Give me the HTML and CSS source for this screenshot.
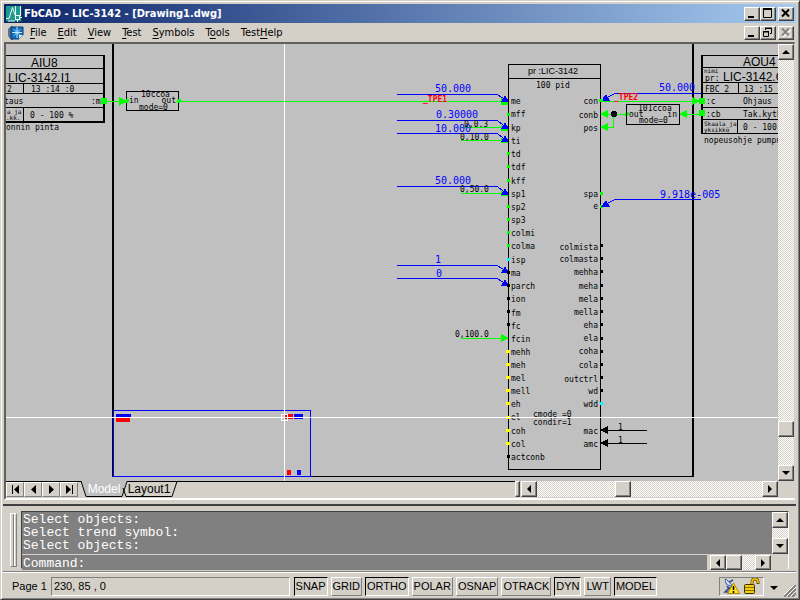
FILE: index.html
```html
<!DOCTYPE html>
<html lang="en">
<head>
<meta charset="utf-8">
<title>FbCAD - LIC-3142 - [Drawing1.dwg]</title>
<link rel="stylesheet" href="styles.css">
</head>
<body>
<div class="window">
  <header class="titlebar">
    <svg class="app-icon" width="16" height="16" viewBox="0 0 16 16" aria-hidden="true">
      <rect width="16" height="16" fill="#1f9a92"/>
      <path d="M0 15.5H15.5V0" fill="none" stroke="#0b4a50"/>
      <path d="M0 12.5H3L6.500 1.500L9 9M9.500 0V9M14.500 0V10M2 15H9" fill="none" stroke="#e8f8f4"/>
      <rect x="9.500" y="9.500" width="4" height="4" fill="#1f9a92" stroke="#fff"/>
      <path d="M11.500 13.500V16M13.500 11.500H16" stroke="#fff"/>
    </svg>
    <h1 class="title">FbCAD - LIC-3142 - [Drawing1.dwg]</h1>
    <div class="caption-buttons">
      <button class="btn" aria-label="Minimize"><svg width="12" height="11"><path d="M2 9H8" stroke="#000" stroke-width="2"/></svg></button>
      <button class="btn" aria-label="Maximize"><svg width="12" height="11"><path d="M1.500 1V9.500H9.500V1M1 1.500H10M1 .5H10" fill="none" stroke="#000"/></svg></button>
      <button class="btn close" aria-label="Close"><svg width="12" height="11"><path d="M2 1.500L9 8.500M9 1.500L2 8.500" stroke="#000" stroke-width="2"/></svg></button>
    </div>
  </header>

  <nav class="menubar">
    <svg class="doc-icon" width="16" height="14" viewBox="0 0 16 14" aria-hidden="true">
      <path d="M0 3L3 0H5V14H3L0 10Z" fill="#5d7389"/>
      <path d="M3 1H15V9L11 13H3Z" fill="#0c6fc0" stroke="#123c66"/>
      <path d="M4 6.500H14M9 1V12M6 3.500L12 9.500M12 3.500L6 9.500" stroke="#bfe9ff"/>
      <path d="M11 13V9H15Z" fill="#dff0ff"/>
    </svg>
    <button class="menu"><u>F</u>ile</button>
    <button class="menu"><u>E</u>dit</button>
    <button class="menu"><u>V</u>iew</button>
    <button class="menu"><u>T</u>est</button>
    <button class="menu"><u>S</u>ymbols</button>
    <button class="menu">T<u>o</u>ols</button>
    <button class="menu">Test<u>H</u>elp</button>
    <div class="caption-buttons">
      <button class="btn" aria-label="Minimize drawing"><svg width="12" height="11"><path d="M2 9H8" stroke="#000" stroke-width="2"/></svg></button>
      <button class="btn" aria-label="Restore drawing"><svg width="12" height="11"><path d="M3.500 3V1.500H9.500V6.500H8M3 1H10M1.500 4V9.500H6.500V4M1 4.500H7M1 5H7" fill="none" stroke="#000"/></svg></button>
      <button class="btn close" aria-label="Close drawing" disabled><svg width="12" height="11"><path d="M3 2.500L10 9.500M10 2.500L3 9.500" stroke="#fff" stroke-width="2"/><path d="M2 1.500L9 8.500M9 1.500L2 8.500" stroke="#808080" stroke-width="2"/></svg></button>
    </div>
  </nav>

  <main class="document">
    <div class="canvas">
      <svg class="drawing" width="100%" height="100%" role="img" aria-label="LIC-3142 function block diagram">
        <g transform="translate(-6 -44)">
          <!-- sheet frame -->
          <path class="k2" d="M113 40V477M693 40V477"/>
          <path class="k" d="M113 476.500H694"/>

          <!-- AIU8 input block -->
          <path class="k" d="M0 55.500H104M0 68.500H104M0 83.500H104M0 93.500H104M0 107.500H104M23.500 83V93M23.500 107V122"/>
          <path class="k2" d="M0 122H105M104 55V123"/>
          <text class="t12" x="31" y="67">AIU8</text>
          <text class="t12" x="8" y="82">LIC-3142.I1</text>
          <text class="t8" x="7" y="92">2</text>
          <text class="t8" x="31" y="92" xml:space="preserve">13 :14 :0</text>
          <text class="t8" x="4" y="104">taus</text>
          <text class="t8" x="91" y="104">:m</text>
          <text class="t6" x="7" y="114">a ja</text>
          <text class="t6" x="6" y="120">.kk.</text>
          <text class="t8" x="30" y="118">0 - 100 %</text>
          <text class="t8" x="6" y="130">onnin pinta</text>

          <!-- 10ccoa block -->
          <rect class="k" x="126.500" y="91.500" width="52" height="19"/>
          <text class="t8" x="141" y="97">10ccoa</text>
          <text class="t8" x="129" y="103">in</text>
          <text class="t8 end" x="176" y="103">out</text>
          <text class="t8" x="139" y="110">mode=0</text>

          <!-- signal wires -->
          <path class="g" d="M104 101.500H126M179 101.500H506M461 127.500H506M461 140.500H506M461 193.500H506M461 338.500H506"/>
          <path class="g" d="M601 101.500H695M601 114.500H627M680 114.500H703M613.500 114V127.500H601"/>
          <g class="gf">
            <path d="M101 98h6v6h-6zM119 97l8 4l-8 5zM501 97l8 4v4h-8zM501 125l8 3v3h-8zM501 138l8 2v3h-8zM501 191l8 2v3h-8zM501 334l8 4l-8 4z"/>
            <circle cx="179" cy="101" r="2"/><circle cx="127" cy="101" r="2"/>
          </g>

          <!-- live values on the left side -->
          <path class="b" d="M397 94.500H497L506 100M397 120.500H497L506 127M397 133.500H497L506 140M397 186.500H497L506 193M397 265.500H497L506 271M397 278.500H497L506 284"/>
          <g class="bf">
            <path d="M505 95l4 7h-8zM505 122l4 7h-8zM505 135l4 7h-8zM505 188l4 7h-8zM505 266l4 7h-8zM505 279l4 7h-8z"/>
          </g>
          <g class="t10 blue">
            <text x="435" y="92">50.000</text>
            <text x="436" y="118">0.30000</text>
            <text x="435" y="132">10.000</text>
            <text x="435" y="184">50.000</text>
            <text x="435" y="263">1</text>
            <text x="436" y="277">0</text>
          </g>
          <text class="t8 red" x="423" y="102">_TPE1</text>
          <g class="t8">
            <text x="464" y="127">0,0.3</text>
            <text x="460" y="140">0,10.0</text>
            <text x="460" y="192">0,50.0</text>
            <text x="455" y="337">0,100.0</text>
          </g>

          <!-- PID block -->
          <rect class="k" x="508.500" y="64.500" width="92" height="405"/>
          <path class="k" d="M508 78.500H601"/>
          <text class="s9" x="528" y="74" xml:space="preserve">pr :LIC-3142</text>
          <text class="t8" x="536" y="88">100 pid</text>
          <g class="t8">
            <text x="511" y="104">me</text><text x="511" y="117">mff</text><text x="511" y="131">kp</text>
            <text x="511" y="144">ti</text><text x="511" y="157">td</text><text x="511" y="170">tdf</text>
            <text x="511" y="184">kff</text><text x="511" y="197">sp1</text><text x="511" y="210">sp2</text>
            <text x="511" y="223">sp3</text><text x="511" y="236">colmi</text><text x="511" y="249">colma</text>
            <text x="511" y="263">isp</text><text x="511" y="276">ma</text><text x="511" y="289">parch</text>
            <text x="511" y="302">ion</text><text x="511" y="316">fm</text><text x="511" y="329">fc</text>
            <text x="511" y="342">fcin</text><text x="511" y="355">mehh</text><text x="511" y="368">meh</text>
            <text x="511" y="381">mel</text><text x="511" y="394">mell</text><text x="511" y="407">eh</text>
            <text x="511" y="420">el</text><text x="511" y="434">coh</text><text x="511" y="447">col</text>
            <text x="511" y="460">actconb</text>
          </g>
          <g class="t8 end">
            <text x="598" y="104">con</text><text x="598" y="118">conb</text><text x="598" y="131">pos</text>
            <text x="598" y="197">spa</text><text x="598" y="209">e</text><text x="598" y="250">colmista</text>
            <text x="598" y="262">colmasta</text><text x="598" y="275">mehha</text><text x="598" y="289">meha</text>
            <text x="598" y="302">mela</text><text x="598" y="315">mella</text><text x="598" y="328">eha</text>
            <text x="598" y="341">ela</text><text x="598" y="354">coha</text><text x="598" y="368">cola</text>
            <text x="598" y="382">outctrl</text><text x="598" y="394">wd</text><text x="598" y="407">wdd</text>
            <text x="598" y="434">mac</text><text x="598" y="447">amc</text>
          </g>
          <text class="t8" x="533" y="417">cmode =0</text>
          <text class="t8" x="533" y="425">condir=1</text>
          <path class="gf" d="M507 113h3v3h-3zM507 152h3v3h-3zM507 165h3v3h-3zM507 179h3v3h-3zM507 205h3v3h-3zM507 218h3v3h-3zM507 231h3v3h-3zM507 244h3v3h-3zM600 192h3v3h-3zM600 205h3v3h-3z"/>
          <path class="cf" d="M507 258h3v3h-3zM600 402h3v3h-3z"/>
          <path class="kf" d="M507 271h3v3h-3zM507 284h3v3h-3zM507 297h3v3h-3zM507 310h3v3h-3zM507 323h3v3h-3zM507 455h3v3h-3zM600 244h3v3h-3zM600 257h3v3h-3zM600 270h3v3h-3zM600 284h3v3h-3zM600 297h3v3h-3zM600 310h3v3h-3zM600 323h3v3h-3zM600 337h3v3h-3zM600 350h3v3h-3zM600 363h3v3h-3zM600 376h3v3h-3zM600 389h3v3h-3z"/>
          <path class="yf" d="M506 350h4v3h-4zM506 363h4v3h-4zM506 376h4v3h-4zM506 389h4v3h-4zM506 402h4v3h-4zM506 416h4v3h-4zM506 429h4v3h-4zM506 442h4v3h-4z"/>

          <!-- right side links -->
          <path class="b" d="M701 93.500H615L606 98M701 199.500H615L606 204"/>
          <path class="bf" d="M606 94l4 7h-9zM606 200l4 7h-9z"/>
          <text class="t10 blue" x="659" y="91">50.000</text>
          <text class="t10 blue" x="660" y="198">9.918e-005</text>
          <text class="t8 red" x="614" y="100">_TPE2</text>
          <path class="gf" d="M599 99h4v3h-4zM600 114l8-4v8zM600 127l8-4v8zM679 114l8-4v8zM692 97l8 4l-8 4z"/>
          <circle class="gf" cx="627" cy="114" r="2"/>
          <circle class="kf" cx="614" cy="114" r="3"/>
          <rect class="k" x="626.500" y="104.500" width="53" height="20"/>
          <text class="t8" x="638" y="111">101ccoa</text>
          <text class="t8" x="629" y="117">out</text>
          <text class="t8 end" x="677" y="117">in</text>
          <text class="t8" x="639" y="123">mode=0</text>
          <path class="k" d="M603 430.500H647M603 443.500H647"/>
          <path class="kf" d="M600 430l8-4v8zM600 443l8-4v8z"/>
          <text class="t8" x="618" y="430">1</text>
          <text class="t8" x="618" y="443">1</text>

          <!-- AOU4 output block -->
          <path class="k" d="M702 55.500H790M702 67.500H790M702 82.500H790M702 93.500H790M702 107.500H790M702 119.500H790M702 133.500H790M738.500 82V93M737.500 119V133"/>
          <path class="k2" d="M702 55V134"/>
          <text class="t12" x="743" y="66">AOU4</text>
          <text class="t6" x="704" y="73">nimi</text>
          <text class="t8" x="705" y="81">pr:</text>
          <text class="t12" x="723" y="81">LIC-3142.O</text>
          <text class="t8" x="705" y="92">FBC 2</text>
          <text class="t8" x="744" y="92" xml:space="preserve">13 :15</text>
          <text class="t8" x="706" y="104">:c</text>
          <text class="t8" x="743" y="104">Ohjaus</text>
          <text class="t8" x="706" y="117">:cb</text>
          <text class="t8" x="743" y="117">Tak.kytk</text>
          <text class="t6" x="704" y="126">Skaala ja</text>
          <text class="t6" x="704" y="132">yksikkö</text>
          <text class="t8" x="743" y="130">0 - 100</text>
          <text class="t8" x="704" y="143">nopeusohje pumpu</text>
          <path class="gf" d="M699 98h6v6h-6zM699 110h6v6h-6z"/>

          <!-- overview window -->
          <rect class="b" x="113.500" y="410.500" width="197" height="66"/>
          <path class="bf" d="M116 414h15v4h-15zM294 414h9v5h-9zM297 470h4v5h-4z"/>
          <path class="rf" d="M116 418h14v4h-14zM284 414h9v5h-9zM287 470h4v5h-4z"/>

          <!-- crosshair cursor -->
          <path class="w" d="M284.500 40V482M0 417.500H800M281.500 414.500h6v6h-6z"/>
        </g>
      </svg>
    </div>

    <div class="vscroll">
      <button class="btn arrow up" aria-label="Scroll up"></button>
      <div class="track"><div class="btn thumb low"></div></div>
      <button class="btn arrow down" aria-label="Scroll down"></button>
    </div>

    <div class="tabs-row">
      <div class="tab-nav">
        <button aria-label="First tab"><svg width="9" height="9"><path d="M1.500 0V9" stroke="#000" stroke-width="1"/><path d="M8 0V9L3 4.500Z"/></svg></button>
        <button aria-label="Previous tab"><svg width="9" height="9"><path d="M7 0V9L2 4.500Z"/></svg></button>
        <button aria-label="Next tab"><svg width="9" height="9"><path d="M2 0V9L7 4.500Z"/></svg></button>
        <button aria-label="Last tab"><svg width="9" height="9"><path d="M1 0V9L6 4.500Z"/><path d="M7.500 0V9" stroke="#000" stroke-width="1"/></svg></button>
      </div>
      <div class="tabs">
        <svg class="tab-shapes" width="98" height="16" aria-hidden="true">
          <path d="M42 15L46 0H96L91 15Z" fill="#d4d0c8"/>
          <path d="M0 0L5 15H42L46 0Z" fill="#c1c0c1"/>
          <path d="M0 0L5 15.500H41L46 .5H96L91 15.500H45L42 7" fill="none" stroke="#000"/>
        </svg>
        <button class="tab active">Model</button>
        <button class="tab">Layout1</button>
      </div>
      <div class="hscroll">
        <div class="btn split"></div>
        <button class="btn arrow left" aria-label="Scroll left"></button>
        <div class="track"><div class="btn thumb mid"></div></div>
        <button class="btn arrow right" aria-label="Scroll right"></button>
      </div>
    </div>
  </main>

  <section class="dock">
    <div class="grip"></div>
    <div class="console">
      <div class="history">
        <div class="lines">
          <p>Select objects:</p>
          <p>Select trend symbol:</p>
          <p>Select objects:</p>
        </div>
        <div class="vscroll">
          <button class="btn arrow up" aria-label="History up"></button>
          <div class="track"></div>
          <button class="btn arrow down" aria-label="History down"></button>
        </div>
      </div>
      <div class="prompt">
        <label for="cmd">Command:</label>
        <input id="cmd" type="text">
        <div class="hscroll">
          <button class="btn arrow left" aria-label="Command left"></button>
          <div class="track"><div class="btn thumb"></div></div>
          <button class="btn arrow right" aria-label="Command right"></button>
        </div>
      </div>
    </div>
  </section>

  <footer class="status">
    <span class="page">Page 1</span>
    <output class="coords">230, 85 , 0</output>
    <div class="modes">
      <button class="mode on">SNAP</button>
      <button class="mode">GRID</button>
      <button class="mode on">ORTHO</button>
      <button class="mode">POLAR</button>
      <button class="mode">OSNAP</button>
      <button class="mode">OTRACK</button>
      <button class="mode on">DYN</button>
      <button class="mode">LWT</button>
      <button class="mode on">MODEL</button>
    </div>
    <div class="tray">
      <svg width="17" height="16" viewBox="0 0 17 16" role="img" aria-label="Communication warning">
        <path d="M2 1L8 7M3 6L10 2M4 8C5 11 8 11 9 8M2 14H9L6 10Z" fill="#8fa8d8" stroke="#35508c" stroke-width="1.500"/>
        <path d="M3 1C1 5 5 9 9 7Z" fill="#c9d8f4" stroke="#4a66a8"/>
        <path d="M10.500 5L16.500 15.500H4.500Z" fill="#ffe21a" stroke="#b08c00"/>
        <path d="M10.500 8V12M10.500 13V15" stroke="#000" stroke-width="1.500"/>
      </svg>
      <svg width="17" height="16" viewBox="0 0 17 16" role="img" aria-label="Unlocked">
        <path d="M9 7V4C9 0 15 0 15 4V6" fill="none" stroke="#6b5200" stroke-width="3"/>
        <path d="M9 7V4C9 0 15 0 15 4V5" fill="none" stroke="#f0c800" stroke-width="1.500"/>
        <rect x="1.500" y="6.500" width="10" height="9" rx="1" fill="#f2cc10" stroke="#3c2f00"/>
        <path d="M2 9.500H11M2 12.500H11" stroke="#8a6c00"/>
      </svg>
    </div>
    <button class="tray-menu" aria-label="Status bar menu"></button>
    <svg class="sizer" width="12" height="12" aria-hidden="true"><path d="M0 12L12 0M4 12L12 4M8 12L12 8" stroke="#808080" stroke-width="2"/><path d="M-1 11L11 -1M3 11L12 2M7 11L12 6" stroke="#fff"/></svg>
  </footer>
</div>
</body>
</html>
```
FILE: styles.css
```css
* { box-sizing: border-box; }
html, body { height: 100%; }
body { margin: 0; background: #d4d0c8; color: #000; }
button { margin: 0; padding: 0; border: 0; background: none; color: inherit; font: inherit; }
p { margin: 0; }

.window {
  display: flex;
  flex-direction: column;
  height: 100vh;
  padding: 2px 3px 1px 2px;
  border: 1px solid;
  border-color: #d4d0c8 #404040 #404040 #d4d0c8;
  box-shadow: inset 1px 1px #fff, inset -1px -1px #808080;
  font: 11px "DejaVu Sans Condensed", "Liberation Sans", sans-serif;
}

.titlebar {
  display: flex;
  align-items: center;
  height: 19px;
  margin: 1px 0 0 1px;
  padding: 0 2px;
  background: linear-gradient(to right, #0a246a, #a6caf0);
}
.title {
  flex: 1;
  margin: 0 0 0 2px;
  color: #fff;
  font: bold 11px "DejaVu Sans Condensed", sans-serif;
}
.caption-buttons { display: flex; margin-left: auto; }

.btn {
  display: flex;
  align-items: center;
  justify-content: center;
  width: 16px;
  height: 14px;
  background: #d4d0c8;
  border: 1px solid;
  border-color: #fff #404040 #404040 #fff;
  box-shadow: inset -1px -1px #808080;
}
.close { margin-left: 2px; }

.menubar {
  display: flex;
  align-items: center;
  height: 19px;
  padding: 0 2px 0 5px;
}
.doc-icon { margin-right: 1px; }
.menu { padding: 0 5px 0 6px; line-height: 18px; }
.menu u { text-underline-offset: 2px; }
.doc-icon + .menu { padding-left: 5px; }

.document {
  flex: 1;
  display: grid;
  grid-template-columns: 1fr 16px;
  grid-template-rows: 1fr 17px;
  min-height: 0;
  margin: 0 1px;
  border: 2px solid;
  border-color: #606060 #d4d0c8 #fff #606060;
  border-right-width: 1px;
}
.canvas { min-width: 0; min-height: 0; overflow: hidden; background: #c1c0c1; }
.drawing { display: block; shape-rendering: crispEdges; }
.k, .k2, .g, .b, .w { fill: none; stroke: #000; }
.k2 { stroke-width: 2; }
.g { stroke: #0f0; }
.b { stroke: #00f; }
.w { stroke: #fff; }
.kf { fill: #000; }
.gf { fill: #0f0; }
.bf { fill: #00f; }
.cf { fill: #0ff; }
.yf { fill: #ff0; }
.rf { fill: #f00; }
.t6, .t8, .t10 { font-family: "DejaVu Sans Mono", "Liberation Mono", monospace; }
.t6 { font-size: 6px; }
.t8 { font-size: 8px; }
.t10 { font-size: 10px; }
.t12 { font: 12px "Liberation Sans", sans-serif; }
.s9 { font: 9px "Liberation Sans", sans-serif; }
.end { text-anchor: end; }
.blue { fill: #00f; }
.red { fill: #f00; font-weight: bold; }

.vscroll, .hscroll { display: flex; }
.vscroll { flex-direction: column; width: 16px; }
.track {
  flex: 1;
  display: flex;
  background: repeating-conic-gradient(#fff 0 25%, #d4d0c8 0 50%) 0 0 / 2px 2px;
}
.vscroll .track { flex-direction: column; }
.arrow, .thumb { flex: none; width: 16px; height: 16px; }
.low { margin-top: auto; margin-bottom: 28px; }
.mid { margin-left: 78px; }
.arrow::before { content: ""; border: 4px solid transparent; }
.up::before { border-top: 0; border-bottom-color: #000; }
.down::before { border-bottom: 0; border-top-color: #000; }
.left::before { border-left: 0; border-right-color: #000; }
.right::before { border-right: 0; border-left-color: #000; }

.tabs-row { display: flex; align-items: flex-start; }
.tab-nav { display: flex; padding-right: 3px; border-top: 1px solid #000; }
.tab-nav button {
  display: flex;
  align-items: center;
  justify-content: center;
  width: 18px;
  height: 15px;
  border: 1px solid;
  border-color: #fff #808080 #808080 #fff;
}
.tabs {
  position: relative;
  flex: 1;
  display: flex;
  height: 16px;
  font: 12px "Liberation Sans", sans-serif;
}
.tabs::after { content: ""; flex: 1; border-top: 1px solid #000; }
.tab-shapes { position: absolute; left: 0; top: 0; }
.tab { position: relative; width: 46px; line-height: 16px; text-align: center; }
.tab + .tab { width: 50px; padding-right: 6px; }
.active { color: #fff; }
.tabs-row .hscroll { width: 263px; }
.split { width: 5px; height: 16px; margin-right: 1px; }

.dock {
  display: flex;
  gap: 4px;
  height: 68px;
  margin-top: 4px;
  padding: 5px 7px 2px;
  border-top: 2px solid #404040;
  border-bottom: 1px solid #808080;
}
.grip {
  width: 7px;
  margin: 2px 0;
  border: 1px solid;
  border-color: #fff #808080 #808080 #fff;
  background: linear-gradient(to right, transparent 2px, #808080 2px 3px, #fff 3px 4px, transparent 4px);
}
.console {
  flex: 1;
  display: flex;
  flex-direction: column;
  border: 1px solid;
  border-color: #404040 #fff #fff #404040;
  color: #fff;
  font: 13px "Liberation Mono", monospace;
}
.history { flex: 1; display: flex; }
.lines { flex: 1; padding: 1px 0 0 1px; background: #808080; line-height: 13px; }
.history .vscroll { height: 42px; }
.prompt { display: flex; height: 16px; border-top: 1px solid #d4d0c8; line-height: 17px; background: #808080; }
.prompt label { padding-left: 1px; }
.prompt input { flex: 1; min-width: 0; padding: 0; border: 0; background: transparent; color: inherit; font: inherit; }
.prompt .hscroll { width: 81px; padding: 0 17px 0 3px; background: #d4d0c8; }
.prompt .btn { width: 16px; height: 15px; }

.status {
  display: flex;
  align-items: center;
  height: 26px;
  padding: 2px 0 1px 9px;
  border-top: 1px solid #fff;
  font: 11px "Liberation Sans", sans-serif;
}
.page { margin-right: 4px; white-space: nowrap; }
.coords {
  flex: 1;
  height: 19px;
  padding-left: 2px;
  border: 1px solid #808080;
  border-color: #808080 #fff #fff #808080;
  line-height: 17px;
}
.page, .coords { font-size: 11px; }
.modes { display: flex; gap: 3px; margin-left: 4px; }
.mode {
  height: 19px;
  padding: 0 1px;
  border: 1px solid;
  border-color: #fff #808080 #808080 #fff;
  line-height: 17px;
}
.on { border-color: #000 #fff #fff #000; }
.tray {
  display: flex;
  align-items: center;
  gap: 3px;
  height: 19px;
  margin-left: 62px;
  padding: 0 3px;
  border: 1px solid;
  border-color: #808080 #fff #fff #808080;
}
.tray-menu { width: 0; height: 0; margin: 4px 6px 0; border: 4px solid transparent; border-bottom: 0; border-top-color: #000; }
.sizer { align-self: flex-end; }
```
